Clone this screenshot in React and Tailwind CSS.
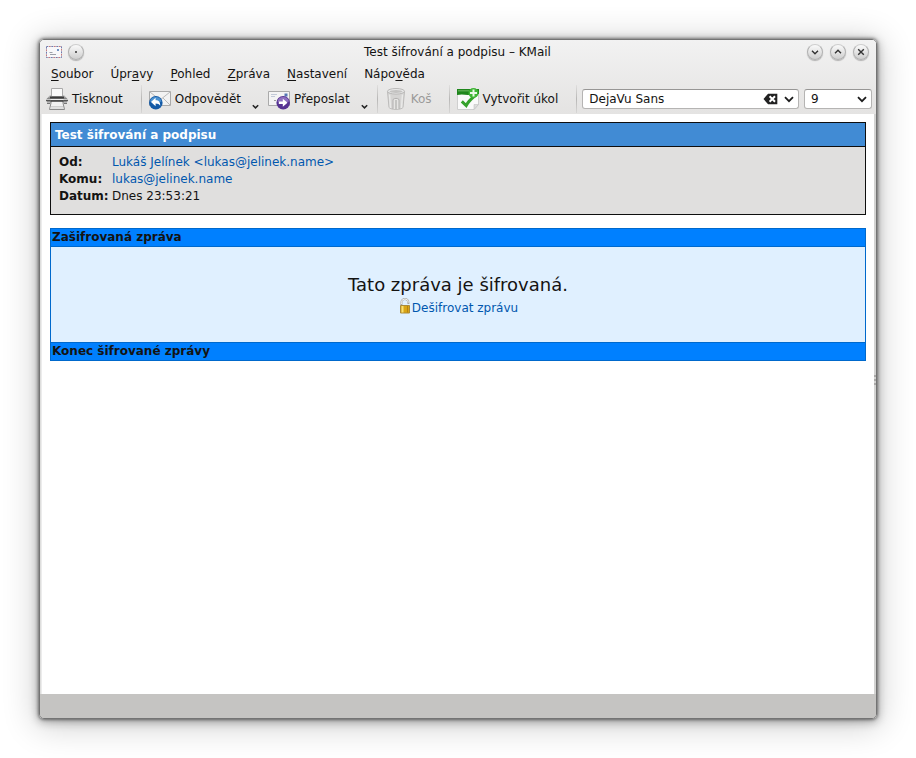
import { useState } from 'react';

const menus = [
  { before: '', key: 'S', after: 'oubor' },
  { before: 'Úpr', key: 'a', after: 'vy' },
  { before: '', key: 'P', after: 'ohled' },
  { before: '', key: 'Z', after: 'práva' },
  { before: '', key: 'N', after: 'astavení' },
  { before: 'Nápo', key: 'v', after: 'ěda' },
];

export default function App() {
  return (
    <div className="flex min-h-screen bg-white p-[39px] font-['DejaVu_Sans',sans-serif] text-xs text-[#141312]">
      <div className="flex flex-1 flex-col overflow-hidden rounded-[5px] border border-[#747474] bg-linear-to-b from-[#f1f1f1] to-[#c5c4c2] to-[680px] shadow-[0_0_3px_1px_rgba(0,0,0,0.4),0_2px_10px_1px_rgba(0,0,0,0.3),0_4px_34px_3px_rgba(0,0,0,0.2)]">
        <header className="bg-linear-to-b from-[#f2f2f2] to-[#e4e3e2]">
          <TitleBar />
          <MenuBar />
          <Toolbar />
        </header>
        <div className="flex flex-1">
          <div className="w-px bg-[#dededd]" />
          <main className="flex-1 border-l border-[#ececec] bg-white p-2">
            <MessageHeader />
            <EncryptedBlock />
          </main>
          <div className="flex w-0.5 flex-col justify-center gap-0.5 bg-[#d3d3d2] pb-12">
            <span className="h-0.5 bg-[#aaa9a8]" />
            <span className="h-0.5 bg-[#aaa9a8]" />
            <span className="h-0.5 bg-[#aaa9a8]" />
          </div>
        </div>
        <footer className="h-6 bg-[#c5c4c2]" />
      </div>
    </div>
  );
}

function TitleBar() {
  return (
    <div className="flex h-[23px] items-center pr-[7px] pl-1.5">
      <div className="flex w-16 items-center gap-1.5">
        <EnvelopeIcon />
        <WindowButton label="Nabídka okna">
          <circle cx="8" cy="8" r="1" fill="#333" stroke="none" />
        </WindowButton>
      </div>
      <h1 className="flex-1 text-center">Test šifrování a podpisu – KMail</h1>
      <div className="flex w-16 items-center justify-end gap-[7px]">
        <WindowButton label="Minimalizovat">
          <path d="M5 6.8 8 9.8l3-3" />
        </WindowButton>
        <WindowButton label="Maximalizovat">
          <path d="m5 9.2 3-3 3 3" />
        </WindowButton>
        <WindowButton label="Zavřít">
          <path d="m5.2 5.2 5.6 5.6m0-5.6-5.6 5.6" />
        </WindowButton>
      </div>
    </div>
  );
}

function WindowButton({ label, children }) {
  return (
    <button
      aria-label={label}
      className="size-4 shrink-0 rounded-full border border-[#b0b0b0] border-t-[#cecece] bg-linear-to-b from-[#fafafa] to-[#cfcfcf] shadow-[0_1px_1px_rgba(0,0,0,0.25)]"
    >
      <svg viewBox="1 1 14 14" className="block size-3.5" fill="none" stroke="#333" strokeWidth="1.4">
        {children}
      </svg>
    </button>
  );
}

function MenuBar() {
  return (
    <nav className="flex h-[21px] items-center gap-[17px] px-[11px]">
      {menus.map((menu) => (
        <button key={menu.before + menu.key}>
          {menu.before}
          <span className="underline underline-offset-2">{menu.key}</span>
          {menu.after}
        </button>
      ))}
    </nav>
  );
}

function Toolbar() {
  const [font, setFont] = useState('DejaVu Sans');

  return (
    <div className="flex h-[30px] items-center pr-1 pl-1.5">
      <ToolButton icon={<PrinterIcon />} text="Tisknout" />
      <Separator className="ml-[18px] mr-[7px]" />
      <ToolButton icon={<ReplyIcon />} text="Odpovědět" />
      <MenuArrow label="Další možnosti odpovědi" />
      <ToolButton icon={<ForwardIcon />} text="Přeposlat" />
      <MenuArrow label="Další možnosti přeposlání" />
      <Separator className="mr-[7px]" />
      <ToolButton icon={<TrashIcon />} text="Koš" disabled />
      <Separator className="ml-[17px] mr-[7px]" />
      <ToolButton icon={<TaskIcon />} text="Vytvořit úkol" />
      <Separator className="ml-[18px] mr-[5px]" />
      <div className="flex h-5 min-w-0 flex-1 items-center rounded-[3px] border border-[#b5b4b3] border-t-[#979695] bg-white pr-1 pl-1.5">
        <input
          aria-label="Písmo"
          className="w-0 min-w-0 flex-1 outline-none"
          value={font}
          onChange={(e) => setFont(e.target.value)}
        />
        <button aria-label="Vymazat" onClick={() => setFont('')}>
          <svg viewBox="0 0 15 12" className="block h-3 w-[15px]">
            <path d="M.5 6 5 .8h9.3v10.4H5z" fill="#222" />
            <path d="m6.6 3.300 5.400 5.400m0-5.400-5.400 5.400" stroke="#fff" strokeWidth="2" />
          </svg>
        </button>
        <button aria-label="Vybrat písmo" className="ml-1.5">
          <ChevronIcon />
        </button>
      </div>
      <div className="ml-[5px] flex h-5 w-[68px] items-center rounded-[3px] border border-[#b5b4b3] border-t-[#979695] bg-white pr-1 pl-1.5">
        <select aria-label="Velikost písma" defaultValue="9" className="w-0 flex-1 appearance-none outline-none">
          <option>8</option>
          <option>9</option>
          <option>10</option>
          <option>12</option>
        </select>
        <ChevronIcon />
      </div>
    </div>
  );
}

function ToolButton({ icon, text, disabled }) {
  return (
    <button disabled={disabled} className="flex shrink-0 items-center gap-1 disabled:text-[#9b9a99]">
      {icon}
      <span>{text}</span>
    </button>
  );
}

function MenuArrow({ label }) {
  return (
    <button aria-label={label} className="ml-2.5 mr-2 shrink-0 pt-4">
      <svg viewBox="0 0 9 6" className="block h-1.5 w-[9px]" fill="none" stroke="#222" strokeWidth="1.5">
        <path d="m1.8 1.2 2.7 2.7 2.7-2.7" />
      </svg>
    </button>
  );
}

function Separator({ className }) {
  return <div className={`h-7 w-px shrink-0 bg-linear-to-b from-[#e0dfde] via-[#b8b7b6] to-[#d8d7d6] ${className}`} />;
}

function MessageHeader() {
  return (
    <section className="border border-[#0e0e0e] bg-[#e0dfde]">
      <h2 className="border-b border-[#0e0e0e] bg-[#418bd4] px-1 pt-1 pb-[3px] font-bold text-white">
        Test šifrování a podpisu
      </h2>
      <table className="mx-2 mt-[7px] mb-[9px] leading-[17px]">
        <tbody>
          <tr>
            <th className="w-[53px] text-left">Od:</th>
            <td>
              <a href="mailto:lukas@jelinek.name" className="text-[#0057ae]">
                Lukáš Jelínek &lt;lukas@jelinek.name&gt;
              </a>
            </td>
          </tr>
          <tr>
            <th className="text-left">Komu:</th>
            <td>
              <a href="mailto:lukas@jelinek.name" className="text-[#0057ae]">
                lukas@jelinek.name
              </a>
            </td>
          </tr>
          <tr>
            <th className="text-left">Datum:</th>
            <td>Dnes 23:53:21</td>
          </tr>
        </tbody>
      </table>
    </section>
  );
}

function EncryptedBlock() {
  return (
    <section className="mt-[13px] border border-[#0069cc] bg-[#0080ff]">
      <h3 className="px-px leading-[17px] font-bold">Zašifrovaná zpráva</h3>
      <div className="flex h-[97px] flex-col items-center border-y border-[#0069cc] bg-[#e0f0ff] pt-[27px]">
        <p className="text-lg leading-[22px]">Tato zpráva je šifrovaná.</p>
        <a href="#decrypt" className="flex items-center text-[#0057ae]">
          <LockIcon />
          <span className="pt-1">Dešifrovat zprávu</span>
        </a>
      </div>
      <p className="px-px leading-[17px] font-bold">Konec šifrované zprávy</p>
    </section>
  );
}

function ChevronIcon() {
  return (
    <svg viewBox="0 0 10 7" className="h-[7px] w-2.5 shrink-0" fill="none" stroke="#1c1c1c" strokeWidth="1.8">
      <path d="m1 1.2 4 4 4-4" />
    </svg>
  );
}

function EnvelopeIcon() {
  return (
    <svg viewBox="0 0 16 12" className="h-3 w-4 shrink-0" fill="none">
      <rect x=".5" y=".5" width="15" height="11" fill="#f8f8fa" stroke="#c9cad2" />
      <rect x=".5" y=".5" width="15" height="11" stroke="#6f7bb0" strokeDasharray="1.5 3.5" />
      <rect x=".5" y=".5" width="15" height="11" stroke="#c9777c" strokeDasharray="1.5 3.5" strokeDashoffset="2.5" />
      <path d="M3.5 6.5h3M4 8.500h6" stroke="#9ca0a8" />
      <rect x="11" y="3" width="2" height="2" fill="#7194c4" />
    </svg>
  );
}

function PrinterIcon() {
  return (
    <svg viewBox="0 0 22 22" className="size-[22px]" fill="none">
      <defs>
        <linearGradient id="printer-body" x2="0" y2="1">
          <stop offset="0" stopColor="#d0d0d0" />
          <stop offset=".5" stopColor="#777" />
          <stop offset="1" stopColor="#ccc" />
        </linearGradient>
      </defs>
      <path d="M4 7h14l3 3.500v5H1v-5z" fill="url(#printer-body)" />
      <path d="M5.500.500h11v8h-11z" fill="#fafafa" stroke="#aaa" />
      <path d="M4 9.500h14" stroke="#3b3b3b" strokeWidth="2" />
      <path d="M0 11.500h22" stroke="#eee" />
      <path d="M0 12.500h4.500m13 0H22" stroke="#555" strokeWidth="1.500" />
      <path d="M1 15.500h3m14 0h3" stroke="#777" />
      <path d="M5 12.500h12v2.500l1.500 6.500h-15L5 15z" fill="#f1f1f1" stroke="#888" />
      <path d="M4.500 13h13" stroke="#3b3b3b" strokeWidth="1.500" />
      <path d="M5 18.500h12M4.500 20h13" stroke="#cfcfcf" />
    </svg>
  );
}

function ReplyIcon() {
  return (
    <svg viewBox="0 0 22 22" className="size-[22px]" fill="none">
      <path d="M.5 3.500h21v14H.5z" fill="#f2f2f2" stroke="#aaa" />
      <path d="m1 4 10 8L21 4M1 17l7-7m13 7-7-7" stroke="#b9b9b9" />
      <circle cx="6.800" cy="14.800" r="6.800" fill="#145aa6" />
      <path d="M1 13.500a6 6 0 0 1 11.600 0C9 15 4.500 15 1 13.500z" fill="#4b91d0" />
      <path d="m2 14 4.600-4.200v2.400c3.400 0 4.800 2 4.600 5.600-1-1.700-2.300-2.400-4.600-2.400v2.800z" fill="#fff" />
    </svg>
  );
}

function ForwardIcon() {
  return (
    <svg viewBox="0 0 22 22" className="size-[22px]" fill="none">
      <path d="M.5 3.500h21v14H.5z" fill="#f4f4f4" stroke="#aaa" />
      <path d="M3 6.500h6M3 8.500h4" stroke="#c3cad8" />
      <path d="M6 12.500h7" stroke="#999" strokeDasharray="2 1" />
      <path d="M16.500 5.500h3v3h-3z" fill="#5576b3" />
      <circle cx="15.200" cy="14.800" r="6.800" fill="#563292" />
      <path d="M9.400 13.500a6 6 0 0 1 11.600 0c-3.600 1.500-8 1.500-11.600 0z" fill="#8e70bf" />
      <path d="M10.800 13.600h4v-2.800l4.700 4-4.700 4V16h-4z" fill="#fff" />
    </svg>
  );
}

function TrashIcon() {
  return (
    <svg viewBox="0 0 22 22" className="size-[22px]" fill="none">
      <path d="M2.500 3.500 4 19.500c2 2.500 12 2.500 14 0l1.500-16z" fill="#d5d4d3" stroke="#bcbbba" />
      <path d="M4.500 6.500 5.500 20M17.500 6.500l-1 13.500" stroke="#e9e9e8" strokeWidth="1.500" />
      <path d="M8 21v-9.500c1.500-1.500 4.500-1.500 6 0V21" fill="#e6e5e4" stroke="#b0afae" />
      <path d="M11 12v9" stroke="#b9b8b7" strokeWidth="1.500" />
      <ellipse cx="11" cy="3.300" rx="8.500" ry="2.800" fill="#e8e8e8" stroke="#bab9b8" />
      <ellipse cx="11" cy="3.500" rx="6.500" ry="1.500" fill="#c4c3c2" />
    </svg>
  );
}

function TaskIcon() {
  return (
    <svg viewBox="0 0 22 22" className="size-[22px]" fill="none">
      <path d="M.5 1.500h21v15l-4.500 5H.5z" fill="#fafafa" stroke="#cfcfcf" />
      <path d="M21.500 16.500H17v5z" fill="#ddd" stroke="#bbb" strokeWidth=".5" />
      <path d="M0 1h22v5c-4 0-7 .500-11 1-4-.500-7-1-11 0z" fill="#1f861c" />
      <path d="M1 2h11v1.500H1z" fill="#55a84b" />
      <path d="m4.800 13.300 4.400 4.200C11 14 14 11 17.500 8" stroke="#35a22c" strokeWidth="3" />
      <circle cx="16.500" cy="5" r="5" fill="#3fb534" />
      <path d="M16.500 1.500v7M13 5h7" stroke="#e9f8e6" strokeWidth="2" />
    </svg>
  );
}

function LockIcon() {
  return (
    <svg viewBox="0 0 14 16" className="h-4 w-3.5" fill="none">
      <path d="M3.400 7V4.500a3.500 3.500 0 0 1 7 0V6" stroke="#a9a9a6" strokeWidth="2" />
      <path d="M3.400 6V4.500a3.500 3.500 0 0 1 7 0" stroke="#f1f1f1" />
      <path d="M2.500 7.500h9V15h-9z" fill="#d9a514" stroke="#a98a3a" />
      <path d="M4.500 8v6.500" stroke="#f8df74" strokeWidth="2" />
      <path d="M9.500 8v6.500" stroke="#b98210" />
    </svg>
  );
}
